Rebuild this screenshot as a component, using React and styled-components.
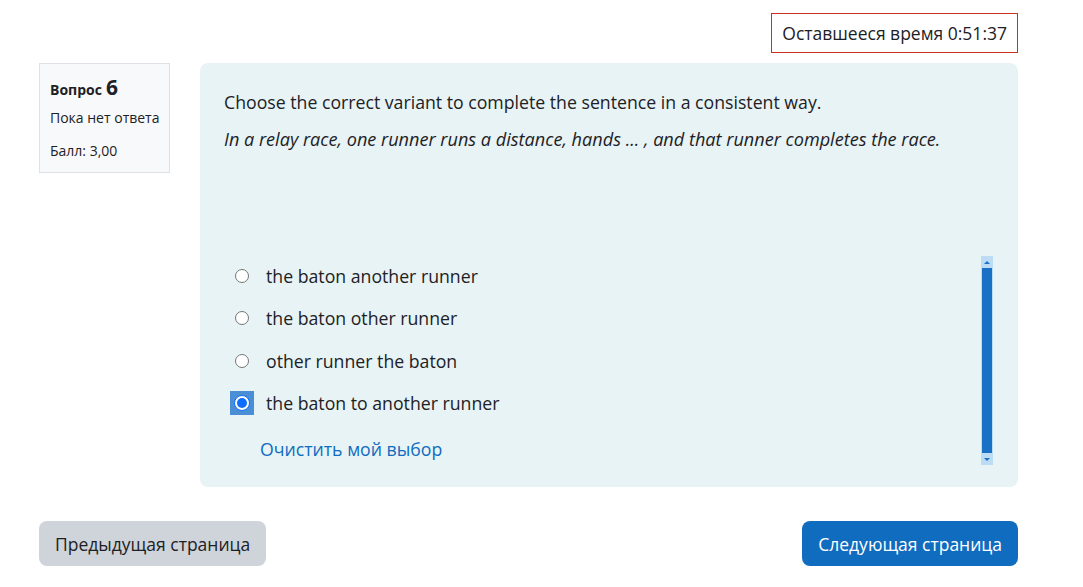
import React from "react";
import styled, { createGlobalStyle } from "styled-components";

const Global = createGlobalStyle`
  html, body { margin: 0; padding: 0; background: #fff; }
  body { font-family: "Open Sans", "Noto Sans", sans-serif; color: #1d2125; }
`;

const Page = styled.div`
  width: 1083px;
  height: 587px;
  box-sizing: border-box;
  padding: 13px 65px 0 39px;
  display: flex;
  flex-direction: column;
`;

const TimerRow = styled.div`
  display: flex;
  justify-content: flex-end;
`;

const Timer = styled.div`
  border: 1px solid #ca3120;
  height: 40px;
  box-sizing: border-box;
  padding: 0 10px;
  display: flex;
  align-items: center;
  font-size: 17.5px;
  color: #1d2125;
`;

const Main = styled.div`
  display: flex;
  gap: 30px;
  margin-top: 10px;
  align-items: flex-start;
`;

const Info = styled.div`
  width: 131px;
  height: 110px;
  box-sizing: border-box;
  background: #f8f9fa;
  border: 1px solid #dee2e6;
  padding: 10px 4px 10px 10px;
  font-size: 14px;
  white-space: nowrap;
  display: flex;
  flex-direction: column;
`;

const QNo = styled.div`
  font-weight: 700;
  font-size: 14px;
  display: flex;
  align-items: baseline;
  gap: 4px;
  line-height: 26px;
  span { font-size: 21px; }
`;

const InfoLine = styled.div`
  line-height: 20px;
  margin-top: ${p => p.$mt || 0}px;
`;

const Content = styled.div`
  flex: 1;
  height: 424px;
  box-sizing: border-box;
  background: #e7f3f5;
  border-radius: 8px;
  padding: 27px 25px 0 24px;
  display: flex;
  flex-direction: column;
`;

const Prompt = styled.div`
  font-size: ${p => (p.$italic ? 18.1 : 17.7)}px;
  line-height: 24px;
  font-style: ${p => (p.$italic ? "italic" : "normal")};
  margin-bottom: ${p => p.$mb || 0}px;
`;

const AnswerArea = styled.div`
  margin-top: 104px;
  display: flex;
  align-items: flex-start;
`;

const Answers = styled.div`
  flex: 1;
  display: flex;
  flex-direction: column;
  padding-left: 9px;
`;

const Row = styled.div`
  display: flex;
  align-items: center;
  height: 42.3px;
  font-size: 17.7px;
`;

const RadioWrap = styled.div`
  width: 24px;
  height: 24px;
  display: flex;
  align-items: center;
  justify-content: center;
  margin-right: 12px;
  margin-left: -3px;
  background: ${p => (p.$focus ? "#4a8fd6" : "transparent")};
`;

const Radio = styled.div`
  width: ${p => (p.$checked ? 16 : 14)}px;
  height: ${p => (p.$checked ? 16 : 14)}px;
  border-radius: 50%;
  box-sizing: border-box;
  border: 1px solid ${p => (p.$checked ? "#0d6efd" : "#767676")};
  background: #fff;
  display: flex;
  align-items: center;
  justify-content: center;
  &::after {
    content: "";
    width: 10px;
    height: 10px;
    border-radius: 50%;
    background: ${p => (p.$checked ? "#0d6efd" : "transparent")};
  }
`;

const Clear = styled.a`
  color: #0f6cbf;
  font-size: 17.7px;
  margin-top: 13px;
  margin-left: 27px;
  text-decoration: none;
`;

const Scrollbar = styled.div`
  width: 12px;
  height: 209px;
  margin-top: 1px;
  background: #bcdcf5;
  display: flex;
  flex-direction: column;
  align-items: center;
`;

const Arrow = styled.div`
  height: 12px;
  display: flex;
  align-items: center;
  justify-content: center;
  &::after {
    content: "";
    border-left: 3px solid transparent;
    border-right: 3px solid transparent;
    ${p => (p.$down ? "border-top: 3px solid #1a73c9;" : "border-bottom: 3px solid #1a73c9;")}
  }
`;

const Thumb = styled.div`
  flex: 1;
  width: 10px;
  background: #1a70c4;
`;

const Buttons = styled.div`
  display: flex;
  justify-content: space-between;
  margin-top: 34px;
`;

const Button = styled.button`
  height: 45px;
  border: none;
  border-radius: 8px;
  padding: 0 16px;
  font-family: inherit;
  font-size: 17.5px;
  background: ${p => (p.$primary ? "#0f6cbf" : "#ced4da")};
  color: ${p => (p.$primary ? "#fff" : "#1d2125")};
`;

const answers = [
  "the baton another runner",
  "the baton other runner",
  "other runner the baton",
  "the baton to another runner",
];

export default function App() {
  return (
    <>
      <Global />
      <Page>
        <TimerRow>
          <Timer>Оставшееся время 0:51:37</Timer>
        </TimerRow>
        <Main>
          <Info>
            <QNo>Вопрос <span>6</span></QNo>
            <InfoLine $mt={5}>Пока нет ответа</InfoLine>
            <InfoLine $mt={13}>Балл: 3,00</InfoLine>
          </Info>
          <Content>
            <Prompt $mb={13}>Choose the correct variant to complete the sentence in a consistent way.</Prompt>
            <Prompt $italic>In a relay race, one runner runs a distance, hands ... , and that runner completes the race.</Prompt>
            <AnswerArea>
              <Answers>
                {answers.map((a, i) => (
                  <Row key={a}>
                    <RadioWrap $focus={i === 3}>
                      <Radio $checked={i === 3} />
                    </RadioWrap>
                    {a}
                  </Row>
                ))}
                <Clear href="#">Очистить мой выбор</Clear>
              </Answers>
              <Scrollbar>
                <Arrow />
                <Thumb />
                <Arrow $down />
              </Scrollbar>
            </AnswerArea>
          </Content>
        </Main>
        <Buttons>
          <Button>Предыдущая страница</Button>
          <Button $primary>Следующая страница</Button>
        </Buttons>
      </Page>
    </>
  );
}
